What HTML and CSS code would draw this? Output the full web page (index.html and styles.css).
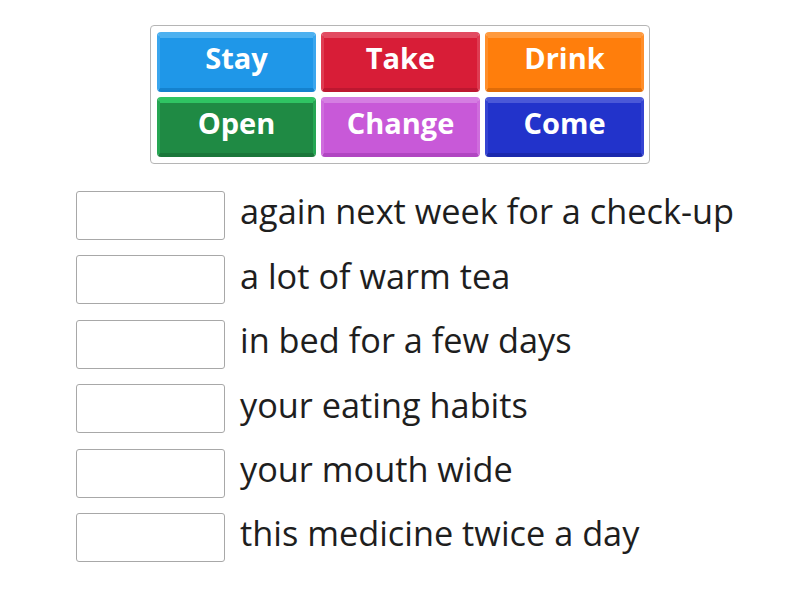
FILE: index.html
```html
<!DOCTYPE html>
<html>
<head>
<meta charset="utf-8">
<link rel="stylesheet" href="styles.css">
</head>
<body>
<div class="page">
  <div class="bank">
    <div class="tile blue">Stay</div>
    <div class="tile red">Take</div>
    <div class="tile orange">Drink</div>
    <div class="tile green">Open</div>
    <div class="tile purple">Change</div>
    <div class="tile navy">Come</div>
  </div>
  <div class="rows">
    <div class="row"><div class="slot"></div><div class="phrase">again next week for a check-up</div></div>
    <div class="row"><div class="slot"></div><div class="phrase">a lot of warm tea</div></div>
    <div class="row"><div class="slot"></div><div class="phrase">in bed for a few days</div></div>
    <div class="row"><div class="slot"></div><div class="phrase">your eating habits</div></div>
    <div class="row"><div class="slot"></div><div class="phrase">your mouth wide</div></div>
    <div class="row"><div class="slot"></div><div class="phrase">this medicine twice a day</div></div>
  </div>
</div>
</body>
</html>
```
FILE: styles.css
```css
html, body {
  margin: 0;
  padding: 0;
  background: #ffffff;
  font-family: "Open Sans", "Liberation Sans", sans-serif;
}
.page {
  width: 800px;
  height: 600px;
  box-sizing: border-box;
  padding-top: 25px;
  overflow: hidden;
}
.bank {
  width: 486px;
  margin: 0 auto;
  padding: 6px;
  border: 1px solid #b5b5b5;
  border-radius: 4px;
  display: grid;
  grid-template-columns: 159px 159px 159px;
  gap: 5px;
}
.tile {
  box-sizing: border-box;
  height: 60px;
  border-radius: 4px;
  color: #fff;
  font-weight: 700;
  font-size: 29px;
  display: flex;
  align-items: center;
  justify-content: center;
  border-style: solid;
  border-width: 6px 3px 4px 3px;
  padding-bottom: 11px;
}
.blue { background: #1f97e8; border-color: #4db1f0 #3aa6ee #1482cf #3aa6ee; }
.red { background: #d81d37; border-color: #e24b61 #df3c52 #bd1730 #df3c52; }
.orange { background: #ff7e0c; border-color: #ff9a3e #ff8e2a #e06c08 #ff8e2a; }
.green { background: #1f8a44; border-color: #2fc463 #26a653 #1a773a #26a653; }
.purple { background: #c859d8; border-color: #d57ee2 #cf6ddd #b146c2 #cf6ddd; }
.navy { background: #2233cb; border-color: #4a58d8 #3544d2 #1b29ad #3544d2; }
.rows {
  margin: 27px 0 0 76px;
  display: flex;
  flex-direction: column;
  gap: 15.4px;
}
.row {
  display: flex;
  align-items: center;
  gap: 15px;
  height: 49px;
}
.slot {
  box-sizing: border-box;
  width: 149px;
  height: 49px;
  border: 1px solid #a8a8a8;
  border-radius: 3px;
  background: #fff;
}
.phrase {
  font-size: 34.3px;
  color: #1e1e1e;
  line-height: 1;
  padding-bottom: 8px;
  white-space: nowrap;
}
```
